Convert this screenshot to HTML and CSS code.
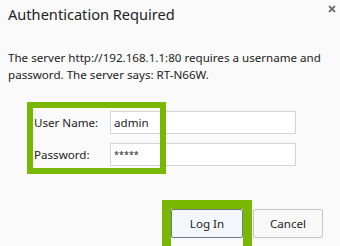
FILE: index.html
```html
<!DOCTYPE html>
<html>
    <head>
        <title>Authentication Required</title>
        <link rel="stylesheet" href="styles.css">
    </head>
    <body>
        <div class="dialog">
            <div class="title-bar">
                <h1>Authentication Required</h1>
                <svg class="close" width="8" height="8" viewBox="0 0 8 8">
                    <path d="M1 1 L7 7 M7 1 L1 7" stroke="#6f6f6f" stroke-width="1.8" fill="none"/>
                </svg>
            </div>
            <p class="message">The server http://192.168.1.1:80 requires a username and password. The server says: RT-N66W.</p>

            <form class="login-form">
                <div class="field">
                    <label for="username">User Name:</label>
                    <input type="text" id="username" value="admin">
                </div>
                <div class="field">
                    <label for="password">Password:</label>
                    <input type="text" id="password" class="masked" value="*****">
                </div>
                <div class="buttons">
                    <button type="submit" class="btn btn-primary">Log In</button>
                    <button type="button" class="btn">Cancel</button>
                </div>
            </form>

            <!-- green highlight boxes drawn over the dialog -->
            <div class="highlight highlight-fields"></div>
            <div class="highlight highlight-login"></div>
        </div>
    </body>
</html>
```

FILE: styles.css
```css
body {
    margin: 0;
    padding: 0;
    background-color: #fafafa;
    font-family: "Noto Sans", "Open Sans", sans-serif;
    color: #222;
}

.dialog {
    position: relative;
    width: 340px;
    height: 246px;
    overflow: hidden;
    padding: 0 8px;
    box-sizing: border-box;
}

.title-bar {
    display: flex;
    justify-content: space-between;
    align-items: flex-start;
    height: 49px;
}

h1 {
    margin: 4px 0 0 0;
    font-size: 14.6px;
    font-weight: normal;
    color: #222;
}

.close {
    margin-top: 5px;
    margin-right: -4px;
}

.message {
    margin: 0;
    font-size: 11.6px;
    line-height: 17px;
    color: #222;
}

.login-form {
    margin-top: 28px;
}

.field {
    display: flex;
    align-items: center;
    margin-bottom: 9px;
    padding-left: 26px;
}

label {
    width: 76px;
    font-size: 11.6px;
}

input[type="text"] {
    width: 186px;
    height: 23px;
    box-sizing: border-box;
    border: 1px solid #d4d4d4;
    background-color: #fff;
    padding: 0 3px;
    font-family: inherit;
    font-size: 11.6px;
    color: #222;
}

input.masked {
    font-size: 9px;
}

.buttons {
    display: flex;
    justify-content: flex-end;
    gap: 10px;
    margin-top: 43px;
    padding-right: 9px;
}

.btn {
    width: 70px;
    height: 29px;
    font-family: inherit;
    font-size: 11.6px;
    color: #222;
    background-color: #f8f8f8;
    border: 1px solid #c8c8c8;
    border-radius: 2px;
}

.btn-primary {
    width: 72px;
    background-color: #f3f6fb;
    border-color: #6d7a8c;
}

/* annotation boxes */
.highlight {
    position: absolute;
    border-style: solid;
    border-color: #7ab800;
    box-sizing: border-box;
}

.highlight-fields {
    left: 27px;
    top: 102px;
    width: 139px;
    height: 72px;
    border-width: 6px;
}

.highlight-login {
    left: 162px;
    top: 200px;
    width: 90px;
    height: 60px;
    border-width: 9px;
}
```
